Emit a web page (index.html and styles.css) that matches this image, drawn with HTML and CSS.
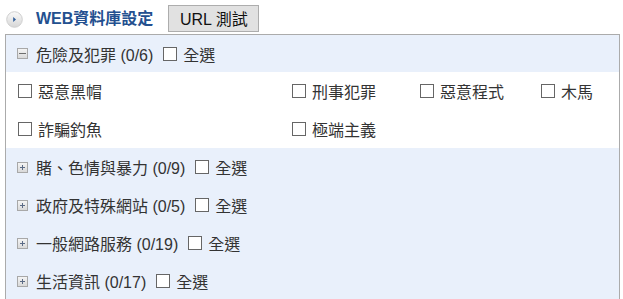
FILE: index.html
```html
<!DOCTYPE html>
<html lang="zh-Hant">
<head>
  <meta charset="UTF-8">
  <title>WEB資料庫設定</title>
  <link rel="stylesheet" href="styles.css">
</head>
<body>
  <div class="toolbar">
    <svg class="nav-icon" width="17" height="17" viewBox="0 0 17 17">
      <defs>
        <linearGradient id="ng" x1="0" y1="0" x2="0" y2="1">
          <stop offset="0" stop-color="#fafafa"/>
          <stop offset="1" stop-color="#d6d6d6"/>
        </linearGradient>
      </defs>
      <circle cx="8.5" cy="8.5" r="7.8" fill="url(#ng)" stroke="#cfcfcf"/>
      <path d="M7.2 6 L10 8.5 L7.2 11 Z" fill="#2f5d9a"/>
    </svg>
    <span class="title">WEB資料庫設定</span>
    <button class="test-btn">URL 測試</button>
  </div>

  <div class="panel">
    <div class="group open">
      <div class="group-head">
        <span class="toggle minus"></span>
        <span class="label">危險及犯罪 (0/6)</span>
        <input type="checkbox" class="chk">
        <span>全選</span>
      </div>
      <div class="items">
        <label class="item"><input type="checkbox" class="chk"><span>惡意黑帽</span></label>
        <label class="item"><input type="checkbox" class="chk"><span>刑事犯罪</span></label>
        <label class="item"><input type="checkbox" class="chk"><span>惡意程式</span></label>
        <label class="item"><input type="checkbox" class="chk"><span>木馬</span></label>
        <label class="item"><input type="checkbox" class="chk"><span>詐騙釣魚</span></label>
        <label class="item"><input type="checkbox" class="chk"><span>極端主義</span></label>
      </div>
    </div>

    <div class="group">
      <div class="group-head">
        <span class="toggle plus"></span>
        <span class="label">賭、色情與暴力 (0/9)</span>
        <input type="checkbox" class="chk">
        <span>全選</span>
      </div>
    </div>

    <div class="group">
      <div class="group-head">
        <span class="toggle plus"></span>
        <span class="label">政府及特殊網站 (0/5)</span>
        <input type="checkbox" class="chk">
        <span>全選</span>
      </div>
    </div>

    <div class="group">
      <div class="group-head">
        <span class="toggle plus"></span>
        <span class="label">一般網路服務 (0/19)</span>
        <input type="checkbox" class="chk">
        <span>全選</span>
      </div>
    </div>

    <div class="group">
      <div class="group-head">
        <span class="toggle plus"></span>
        <span class="label">生活資訊 (0/17)</span>
        <input type="checkbox" class="chk">
        <span>全選</span>
      </div>
    </div>
  </div>
</body>
</html>
```

FILE: styles.css
```css
body {
  margin: 0;
  padding: 0 3px 0 5px;
  font-family: 'Liberation Sans', 'Noto Sans CJK TC', sans-serif;
  font-size: 16px;
  color: #333;
  background: #fff;
  overflow: hidden;
}

.toolbar {
  display: flex;
  align-items: center;
  height: 34px;
}

.nav-icon {
  margin: 4px 0 0 1px;
}

.title {
  margin-left: 13px;
  font-size: 16px;
  font-weight: bold;
  color: #23508f;
}

.test-btn {
  margin-left: 15px;
  margin-top: 2px;
  height: 27px;
  width: 91px;
  padding: 0;
  font-family: 'Liberation Sans', 'Noto Sans CJK TC', sans-serif;
  font-size: 16px;
  color: #111;
  background: #e1e1e1;
  border: 1px solid #adadad;
  border-radius: 0;
}

.panel {
  border: 1px solid #ababab;
  border-bottom: none;
  background: #e9f0fb;
}

.group-head {
  display: flex;
  align-items: center;
  height: 38px;
  padding-left: 11px;
}

.group.open .group-head {
  height: 37px;
}

.toggle {
  width: 9px;
  height: 9px;
  border: 1px solid #a8a8a8;
  background: linear-gradient(#f4f4f4, #d9d9d9);
  position: relative;
  margin-right: 8px;
}

.toggle::before,
.toggle::after {
  content: "";
  position: absolute;
  background: #5b6b86;
}

.minus::before {
  left: 1px;
  right: 1px;
  top: 4px;
  height: 1px;
  background: #6d6d6d;
}

.minus::after {
  display: none;
}

.plus::before {
  left: 2px;
  right: 2px;
  top: 4px;
  height: 1px;
}

.plus::after {
  top: 2px;
  bottom: 2px;
  left: 4px;
  width: 1px;
}

.label {
  margin-right: 10px;
}

.chk {
  appearance: none;
  -webkit-appearance: none;
  width: 14px;
  height: 14px;
  margin: 0 6px 0 0;
  border: 1px solid #666;
  background: #fff;
  flex: none;
}

.items {
  display: grid;
  grid-template-columns: 274px 128px 121px auto;
  grid-auto-rows: 38px;
  padding-left: 12px;
  background: #fff;
}

.item {
  display: flex;
  align-items: center;
}
```
